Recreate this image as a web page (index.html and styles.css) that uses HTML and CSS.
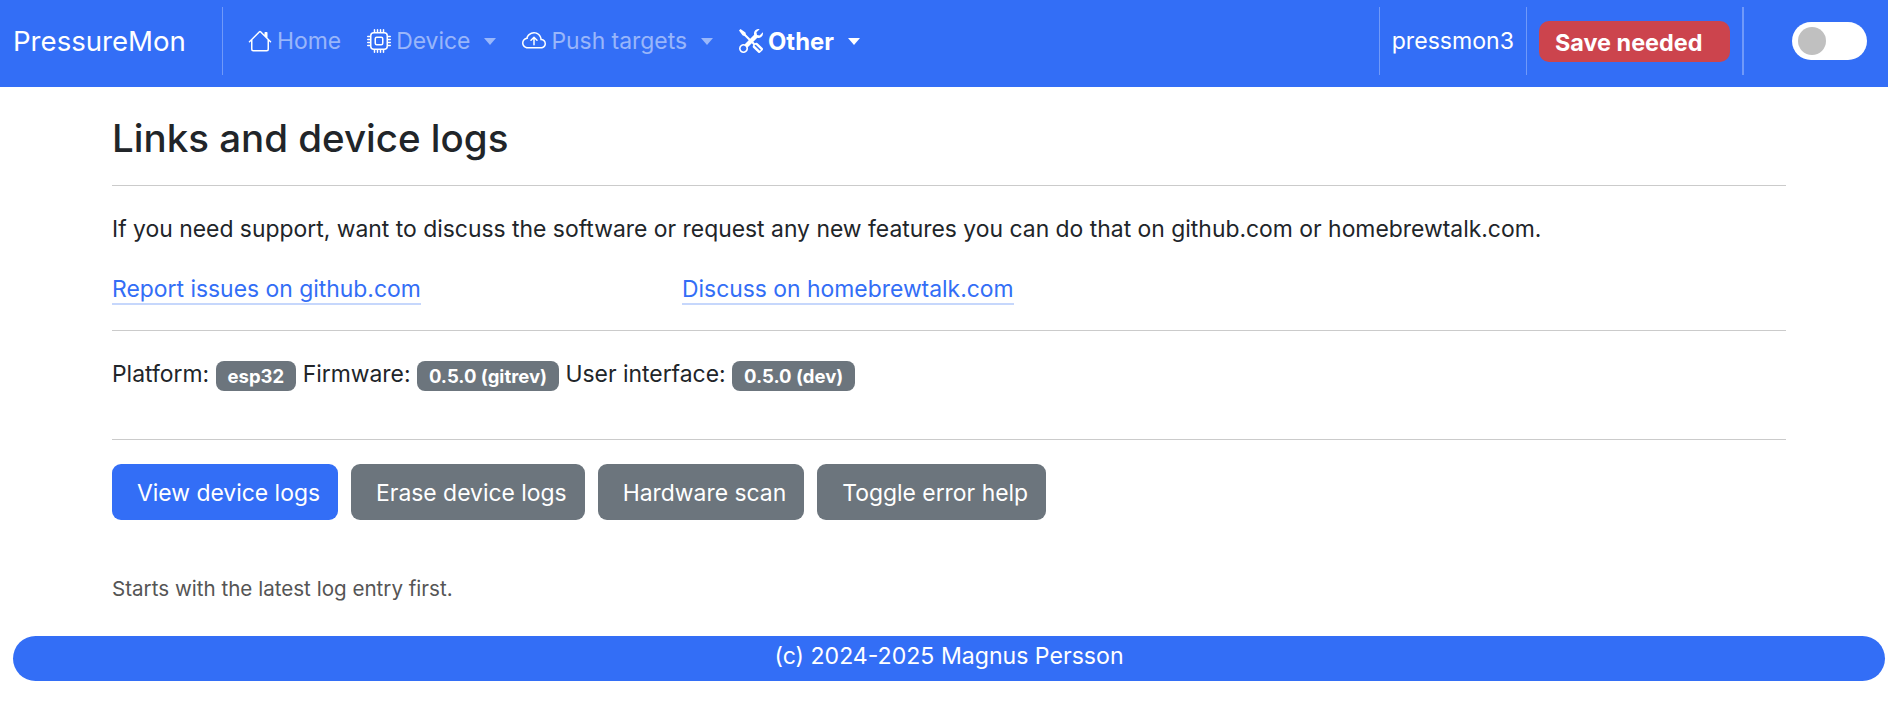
FILE: index.html
```html
<!DOCTYPE html>
<html lang="en">
<head>
<meta charset="utf-8">
<title>PressureMon</title>
<link rel="stylesheet" href="styles.css">
</head>
<body>
<nav class="navbar">
  <a class="brand">PressureMon</a>
  <ul class="menu">
    <li class="menu-item muted"><svg class="icon" viewBox="0 0 16 16"><path d="M8.707 1.5a1 1 0 0 0-1.414 0L.646 8.146a.5.5 0 0 0 .708.708L2 8.207V13.5A1.5 1.5 0 0 0 3.5 15h9a1.5 1.5 0 0 0 1.5-1.5V8.207l.646.647a.5.5 0 0 0 .708-.708L13 5.793V2.5a.5.5 0 0 0-.5-.5h-1a.5.5 0 0 0-.5.5v1.293zM13 7.207V13.5a.5.5 0 0 1-.5.5h-9a.5.5 0 0 1-.5-.5V7.207l5-5z"/></svg><span>Home</span></li>
    <li class="menu-item muted"><svg class="icon" viewBox="0 0 16 16"><path d="M5 0a.5.5 0 0 1 .5.5V2h1V.5a.5.5 0 0 1 1 0V2h1V.5a.5.5 0 0 1 1 0V2h1V.5a.5.5 0 0 1 1 0V2A2.5 2.5 0 0 1 14 4.5h1.5a.5.5 0 0 1 0 1H14v1h1.5a.5.5 0 0 1 0 1H14v1h1.5a.5.5 0 0 1 0 1H14v1h1.5a.5.5 0 0 1 0 1H14a2.5 2.5 0 0 1-2.5 2.5v1.5a.5.5 0 0 1-1 0V14h-1v1.5a.5.5 0 0 1-1 0V14h-1v1.5a.5.5 0 0 1-1 0V14h-1v1.5a.5.5 0 0 1-1 0V14A2.5 2.5 0 0 1 2 11.5H.5a.5.5 0 0 1 0-1H2v-1H.5a.5.5 0 0 1 0-1H2v-1H.5a.5.5 0 0 1 0-1H2v-1H.5a.5.5 0 0 1 0-1H2A2.5 2.5 0 0 1 4.5 2V.5A.5.5 0 0 1 5 0m-.5 3A1.5 1.5 0 0 0 3 4.5v7A1.5 1.5 0 0 0 4.5 13h7a1.5 1.5 0 0 0 1.5-1.5v-7A1.5 1.5 0 0 0 11.5 3zM5 6.5A1.5 1.5 0 0 1 6.5 5h3A1.5 1.5 0 0 1 11 6.5v3A1.5 1.5 0 0 1 9.5 11h-3A1.5 1.5 0 0 1 5 9.5zM6.5 6a.5.5 0 0 0-.5.5v3a.5.5 0 0 0 .5.5h3a.5.5 0 0 0 .5-.5v-3a.5.5 0 0 0-.5-.5z"/></svg><span>Device</span><i class="caret"></i></li>
    <li class="menu-item muted"><svg class="icon" viewBox="0 0 16 16"><path d="M7.646 5.146a.5.5 0 0 1 .708 0l2 2a.5.5 0 0 1-.708.708L8.5 6.707V10.5a.5.5 0 0 1-1 0V6.707L6.354 7.854a.5.5 0 1 1-.708-.708z"/><path d="M4.406 3.342A5.53 5.53 0 0 1 8 2c2.69 0 4.923 2 5.166 4.579C14.758 6.804 16 8.137 16 9.773 16 11.569 14.502 13 12.687 13H3.781C1.708 13 0 11.366 0 9.318c0-1.763 1.266-3.223 2.942-3.593.143-.863.698-1.723 1.464-2.383m.653.757c-.757.653-1.153 1.44-1.153 2.056v.448l-.445.049C2.064 6.805 1 7.952 1 9.318 1 10.785 2.23 12 3.781 12h8.906C13.98 12 15 10.988 15 9.773c0-1.216-1.02-2.228-2.313-2.228h-.5v-.5C12.188 4.825 10.328 3 8 3a4.53 4.53 0 0 0-2.941 1.1z"/></svg><span>Push targets</span><i class="caret"></i></li>
    <li class="menu-item active"><svg class="icon" viewBox="0 0 16 16"><path d="M1 0 0 1l2.2 3.081a1 1 0 0 0 .815.419h.07a1 1 0 0 1 .708.293l2.675 2.675-2.617 2.654A3.003 3.003 0 0 0 0 13a3 3 0 1 0 5.878-.851l2.654-2.617.968.968-.305.914a1 1 0 0 0 .242 1.023l3.27 3.27a.997.997 0 0 0 1.414 0l1.586-1.586a.997.997 0 0 0 0-1.414l-3.27-3.27a1 1 0 0 0-1.023-.242L10.5 9.5l-.96-.96 2.68-2.643A3.005 3.005 0 0 0 16 3q0-.405-.102-.777l-2.14 2.141L12 4l-.364-1.757L13.777.102a3 3 0 0 0-3.675 3.68L7.462 6.46 4.793 3.793a1 1 0 0 1-.293-.707v-.071a1 1 0 0 0-.419-.814zm9.646 10.646a.5.5 0 0 1 .708 0l2.914 2.915a.456.456 0 0 1-.16.746.5.5 0 0 1-.548-.108l-2.914-2.915a.5.5 0 0 1 0-.708zM3 11l.471.242.529.026.287.445.445.287.026.529L5 13l-.242.471-.026.529-.445.287-.287.445-.529.026L3 15l-.471-.242L2 14.732l-.287-.445L1.268 14l-.026-.529L1 13l.242-.471.026-.529.445-.287.287-.445.529-.026z"/></svg><span>Other</span><i class="caret"></i></li>
  </ul>
  <div class="host">pressmon3</div>
  <div class="save-wrap"><button class="save">Save needed</button></div>
  <div class="switch-wrap"><span class="switch"><span class="knob"></span></span></div>
</nav>
<main class="content">
  <h1 class="title">Links and device logs</h1>
  <hr class="rule">
  <p class="intro">If you need support, want to discuss the software or request any new features you can do that on github.com or homebrewtalk.com.</p>
  <div class="links">
    <div class="link-col"><a class="link">Report issues on github.com</a></div>
    <div class="link-col"><a class="link">Discuss on homebrewtalk.com</a></div>
  </div>
  <hr class="rule">
  <p class="versions">Platform: <span class="badge">esp32</span> Firmware: <span class="badge">0.5.0 (gitrev)</span> User interface: <span class="badge">0.5.0 (dev)</span></p>
  <hr class="rule">
  <div class="actions">
    <button class="btn primary">View device logs</button>
    <button class="btn secondary">Erase device logs</button>
    <button class="btn secondary">Hardware scan</button>
    <button class="btn secondary">Toggle error help</button>
  </div>
  <p class="note">Starts with the latest log entry first.</p>
</main>
<footer class="footer">(c) 2024-2025 Magnus Persson</footer>
</body>
</html>
```
FILE: styles.css
```css
* { box-sizing: border-box; }
html, body { margin: 0; padding: 0; }
body {
  font-family: Inter, "Liberation Sans", sans-serif;
  font-size: 22.9px;
  line-height: 33.6px;
  color: #212529;
  background: #fff;
}
.navbar {
  height: 87px;
  background: #336ef6;
  display: flex;
  align-items: center;
  color: #fff;
  padding: 7px 21px 12px 13px;
}
.brand {
  font-size: 27.6px;
  width: 210px;
  height: 68px;
  display: flex;
  align-items: center;
  padding-top: 1px;
  border-right: 1px solid rgba(255,255,255,.3);
  flex: none;
}
.menu {
  list-style: none;
  margin: 0;
  padding: 0 0 0 25px;
  display: flex;
  flex: 1;
  gap: 26px;
}
.menu-item { display: flex; align-items: center; gap: 5px; }
.menu-item span { padding-top: 2px; }
.menu-item.muted span { color: rgba(255,255,255,.5); }
.menu-item.active span { font-weight: 700; font-size: 23.8px; }
.icon { width: 24px; height: 24px; fill: #fff; flex: none; }
.caret {
  width: 0; height: 0;
  margin-left: 9px;
  border-left: 6.5px solid transparent;
  border-right: 6.5px solid transparent;
  border-top: 7px solid #fff;
}
.muted .caret { border-top-color: rgba(255,255,255,.5); }
.host {
  height: 68px;
  font-size: 23.1px;
  display: flex;
  align-items: center;
  padding: 2px 12px 0;
  border-left: 1px solid rgba(255,255,255,.3);
  border-right: 1px solid rgba(255,255,255,.3);
}
.save-wrap {
  height: 68px;
  display: flex;
  align-items: center;
  padding: 0 12px;
  border-right: 2px solid rgba(255,255,255,.3);
}
.save {
  width: 191px;
  height: 41px;
  background: #cc444d;
  color: #fff;
  border: 0;
  border-radius: 10px;
  font: 700 23.4px Inter, sans-serif;
  text-align: left;
  padding: 2px 16px 0;
}
.switch-wrap { padding-left: 48px; }
.switch {
  display: block;
  width: 75px;
  height: 38px;
  border-radius: 19px;
  background: #fff;
  padding: 5px 6px;
}
.knob { display: block; width: 28px; height: 28px; border-radius: 50%; background: #c0c0c0; }
.content { padding: 0 102px 0 112px; }
.title { margin: 0; padding-top: 29px; font-size: 38.5px; line-height: 45px; font-weight: 500; }
.rule { margin: 24px 0 0; border: 0; border-top: 1px solid #cbcbcb; }
.intro { margin: 0; padding-top: 27px; }
.links { display: grid; grid-template-columns: 570px 1fr; margin-top: 26px; }
.link { color: #336ef6; border-bottom: 2px solid rgba(51,110,246,.28); }
.versions { margin: 0; padding-top: 27px; height: 84px; }
.badge {
  display: inline-block;
  background: #6c757d;
  color: #fff;
  font-size: 18.5px;
  font-weight: 700;
  line-height: 30px;
  padding: 0 12px;
  border-radius: 8px;
  vertical-align: -1px;
}
.actions { display: flex; gap: 13px; margin-top: 24px; }
.btn {
  height: 56px;
  padding: 2px 18px 0 25px;
  border: 0;
  border-radius: 9px;
  color: #fff;
  font: 400 22.9px Inter, sans-serif;
}
.primary { background: #336ef6; }
.secondary { background: #6c757d; }
.note { margin: 0; padding-top: 54px; font-size: 20.6px; line-height: 30px; color: #555; }
.footer {
  margin: 32px 3px 20px 13px;
  height: 45px;
  font-size: 23.1px;
  line-height: 41px;
  text-align: center;
  background: #336ef6;
  color: #fff;
  border-radius: 23px;
}
```
